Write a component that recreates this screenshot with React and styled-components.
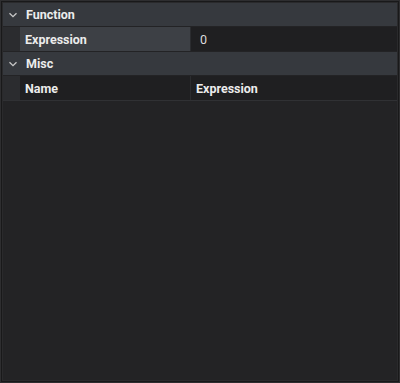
import React from "react";
import styled, { createGlobalStyle } from "styled-components";

const Global = createGlobalStyle`
  html, body { margin: 0; padding: 0; background: #1b1b1c; }
  body { font-family: Roboto, "Noto Sans", Arial, sans-serif; }
  * { box-sizing: border-box; }
`;

const Frame = styled.div`
  width: 400px;
  height: 383px;
  border: 1px solid #2e2e30;
  background: #19191a;
  padding: 1px;
  display: flex;
`;

const Panel = styled.div`
  flex: 1;
  background: #232325;
  border: 1px solid #2a2a2c;
  display: flex;
  flex-direction: column;
  gap: 1px;
  overflow: hidden;
`;

const Category = styled.div`
  height: 23px;
  flex: none;
  background: #36393e;
  display: flex;
  align-items: center;
  color: #ececec;
  font-weight: 700;
  font-size: 12.5px;
`;

const Chevron = styled.svg`
  width: 10px;
  height: 10px;
  margin: 0 8px 0 5px;
  flex: none;
`;

const Row = styled.div`
  height: ${(p) => (p.$last ? "25px" : "24px")};
  flex: none;
  display: grid;
  grid-template-columns: 16px 170px 1fr;
  column-gap: 1px;
  background: #2b2c2f;
  border-bottom: ${(p) => (p.$last ? "1px solid #303134" : "none")};
`;

const Gutter = styled.div`
  background: #2b2c2f;
`;

const Cell = styled.div`
  display: flex;
  align-items: center;
  padding-left: ${(p) => (p.$value ? "9px" : "5px")};
  background: ${(p) => (p.$selected ? "#3d4045" : "#1f1f21")};
  color: ${(p) => (p.$bold ? "#ececec" : "#dcdcdc")};
  font-weight: ${(p) => (p.$bold ? 700 : 400)};
  font-size: 12.5px;
  white-space: nowrap;
`;

const Down = () => (
  <Chevron viewBox="0 0 10 10">
    <path d="M1.5 3.2 L5 6.7 L8.5 3.2" fill="none" stroke="#c8c8c8" strokeWidth="1.3" />
  </Chevron>
);

export default function App() {
  return (
    <>
      <Global />
      <Frame>
        <Panel>
          <Category>
            <Down />
            Function
          </Category>
          <Row>
            <Gutter />
            <Cell $selected $bold>Expression</Cell>
            <Cell $value>0</Cell>
          </Row>
          <Category>
            <Down />
            Misc
          </Category>
          <Row $last>
            <Gutter />
            <Cell $bold>Name</Cell>
            <Cell $bold>Expression</Cell>
          </Row>
        </Panel>
      </Frame>
    </>
  );
}
